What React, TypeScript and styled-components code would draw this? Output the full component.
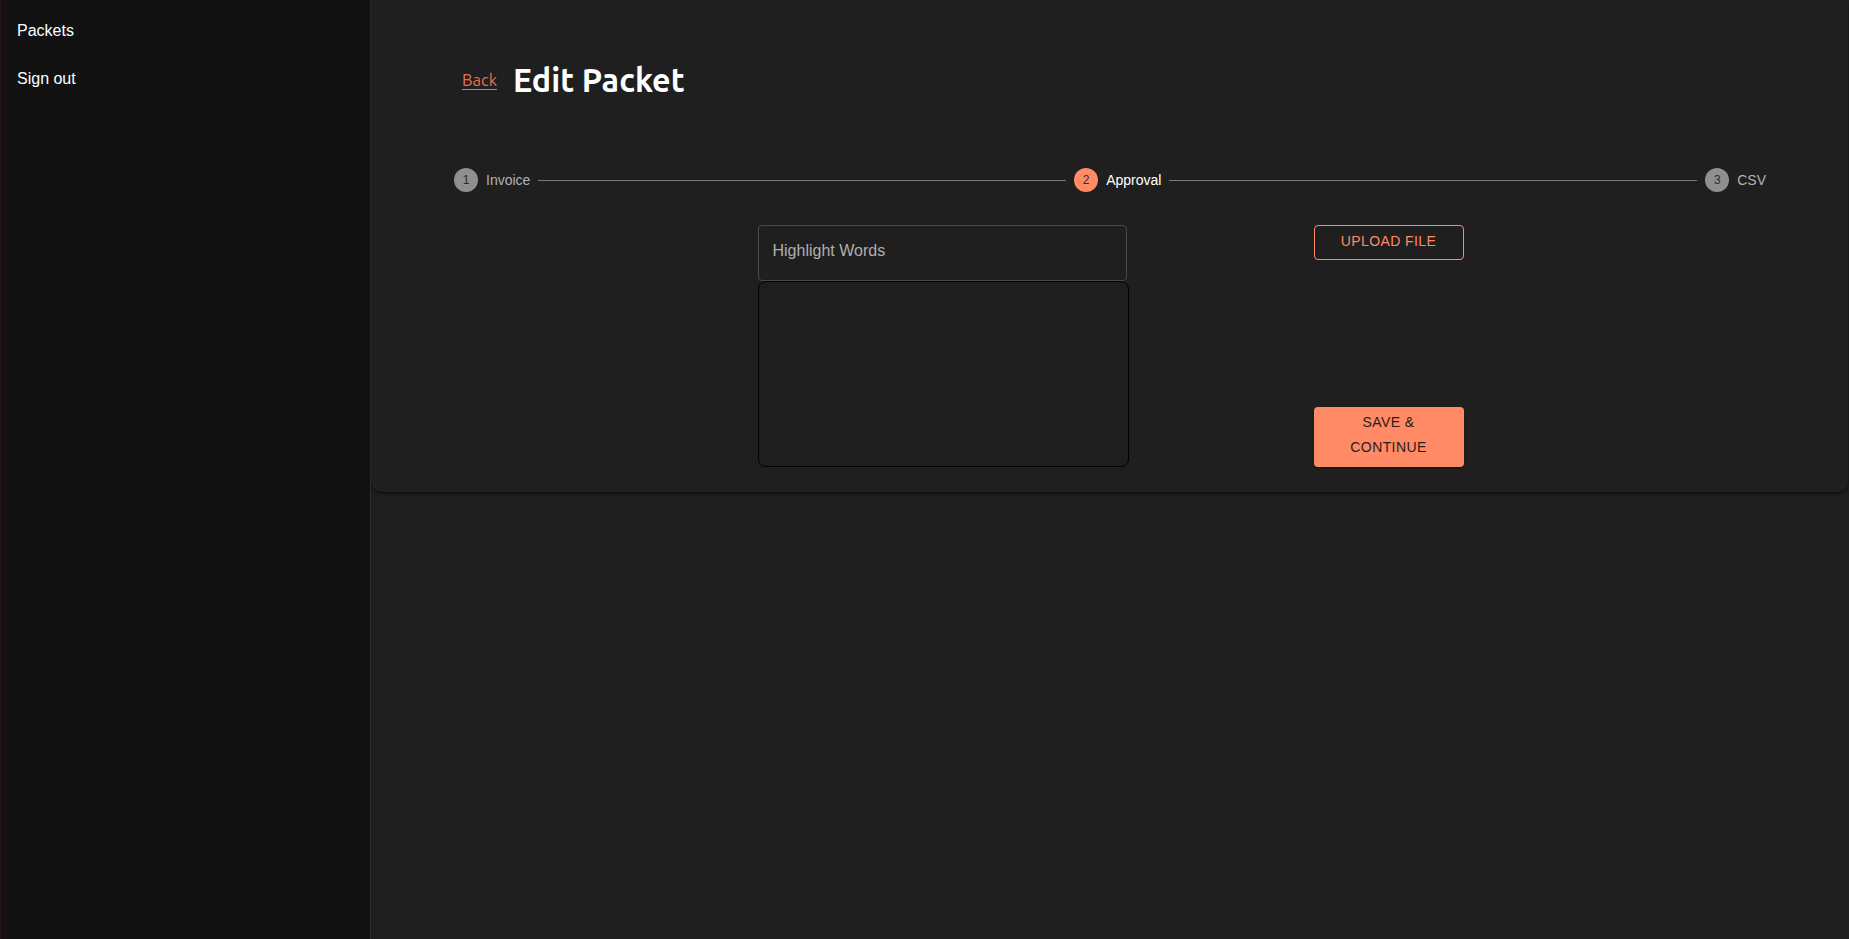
import React from "react";
import styled, { createGlobalStyle } from "styled-components";

const GlobalStyle = createGlobalStyle`
  html, body { margin: 0; padding: 0; background: #1e1e1e; }
  body { font-family: "Liberation Sans", Arial, sans-serif; color: #fff; }
  * { box-sizing: border-box; }
`;

const Layout = styled.div`
  display: flex;
  height: 939px;
  width: 100%;
`;

const Sidebar = styled.nav`
  width: 371px;
  flex-shrink: 0;
  background: #121212;
  border-left: 1px solid #24141a;
  border-right: 1px solid #2e2e2e;
  padding-top: 7px;
  display: flex;
  flex-direction: column;
`;

const NavItem = styled.a`
  display: flex;
  align-items: center;
  height: 48px;
  padding: 0 16px;
  font-size: 16px;
  color: #fff;
  text-decoration: none;
  cursor: pointer;
`;

const Main = styled.main`
  flex: 1;
  background: #1e1e1e;
  min-width: 0;
`;

const Paper = styled.section`
  background: #1f1f1f;
  border-radius: 0 8px 10px 10px;
  box-shadow: 0 2px 3px rgba(0, 0, 0, 0.35), 0 1px 1px rgba(0, 0, 0, 0.2);
  padding: 55px 74px 25px 75px;
  margin-right: 1px;
`;

const Header = styled.header`
  display: flex;
  align-items: center;
  gap: 16px;
  height: 50px;
  padding-left: 16px;
`;

const BackLink = styled.a`
  font-family: "Ubuntu", "Noto Sans", sans-serif;
  font-size: 16.5px;
  color: #e8704f;
  text-decoration: underline;
  text-underline-offset: 3px;
  cursor: pointer;
`;

const Title = styled.h1`
  margin: 0;
  font-family: "Ubuntu", "Open Sans", sans-serif;
  font-weight: 700;
  font-size: 32.3px;
  color: #fff;
`;

const Stepper = styled.div`
  display: flex;
  align-items: center;
  margin-top: 63px;
  height: 24px;
`;

const Step = styled.div`
  display: flex;
  align-items: center;
  padding: 0 8px;
`;

const StepIcon = styled.span<{ $active?: boolean }>`
  width: 24px;
  height: 24px;
  border-radius: 50%;
  background: ${(p) => (p.$active ? "#ff8a65" : "#8f8f8f")};
  color: ${(p) => (p.$active ? "#3a2a24" : "#2a2a2a")};
  font-size: 12px;
  display: flex;
  align-items: center;
  justify-content: center;
`;

const StepLabel = styled.span<{ $active?: boolean }>`
  margin-left: 8px;
  font-size: 14px;
  color: ${(p) => (p.$active ? "#ffffff" : "#b3b3b3")};
`;

const Connector = styled.span`
  flex: 1;
  height: 1px;
  background: #7a7a7a;
`;

const Form = styled.div`
  display: flex;
  justify-content: center;
  gap: 185px;
  margin-top: 33px;
  padding-left: 1px;
`;

const LeftColumn = styled.div`
  width: 371px;
  display: flex;
  flex-direction: column;
`;

const TextField = styled.input`
  width: 369px;
  height: 56px;
  background: transparent;
  border: 1px solid #4a4a4a;
  border-radius: 4px;
  padding: 0 14px 4px;
  font-family: "Liberation Sans", Arial, sans-serif;
  font-size: 16px;
  color: #fff;
  outline: none;
  &::placeholder { color: #b0b0b0; opacity: 1; }
`;

const TextArea = styled.div`
  height: 186px;
  border: 1px solid #000;
  border-radius: 8px;
  background: #1e1e1e;
`;

const RightColumn = styled.div`
  width: 150px;
  display: flex;
  flex-direction: column;
  justify-content: space-between;
`;

const OutlinedButton = styled.button`
  height: 35px;
  padding: 0 8px 3px;
  background: transparent;
  border: 1px solid #ff8a65;
  border-radius: 4px;
  color: #ff8a65;
  font-family: "Liberation Sans", Arial, sans-serif;
  font-size: 14px;
  letter-spacing: 0.4px;
  text-transform: uppercase;
  cursor: pointer;
`;

const ContainedButton = styled.button`
  height: 60px;
  padding: 3px 16px 7px;
  background: #ff8a65;
  border: none;
  border-radius: 4px;
  color: #2a1d18;
  font-family: "Liberation Sans", Arial, sans-serif;
  font-size: 14px;
  line-height: 25px;
  letter-spacing: 0.4px;
  text-transform: uppercase;
  box-shadow: 0 2px 1px -1px rgba(0,0,0,0.2), 0 1px 1px rgba(0,0,0,0.14), 0 1px 3px rgba(0,0,0,0.12);
  cursor: pointer;
`;

const steps = [
  { n: 1, label: "Invoice", active: false },
  { n: 2, label: "Approval", active: true },
  { n: 3, label: "CSV", active: false },
];

export default function App() {
  return (
    <>
      <GlobalStyle />
      <Layout>
        <Sidebar>
          <NavItem>Packets</NavItem>
          <NavItem>Sign out</NavItem>
        </Sidebar>
        <Main>
          <Paper>
            <Header>
              <BackLink>Back</BackLink>
              <Title>Edit Packet</Title>
            </Header>
            <Stepper>
              {steps.map((s, i) => (
                <React.Fragment key={s.n}>
                  {i > 0 && <Connector />}
                  <Step>
                    <StepIcon $active={s.active}>{s.n}</StepIcon>
                    <StepLabel $active={s.active}>{s.label}</StepLabel>
                  </Step>
                </React.Fragment>
              ))}
            </Stepper>
            <Form>
              <LeftColumn>
                <TextField placeholder="Highlight Words" />
                <TextArea />
              </LeftColumn>
              <RightColumn>
                <OutlinedButton>Upload file</OutlinedButton>
                <ContainedButton>Save &amp; Continue</ContainedButton>
              </RightColumn>
            </Form>
          </Paper>
        </Main>
      </Layout>
    </>
  );
}
